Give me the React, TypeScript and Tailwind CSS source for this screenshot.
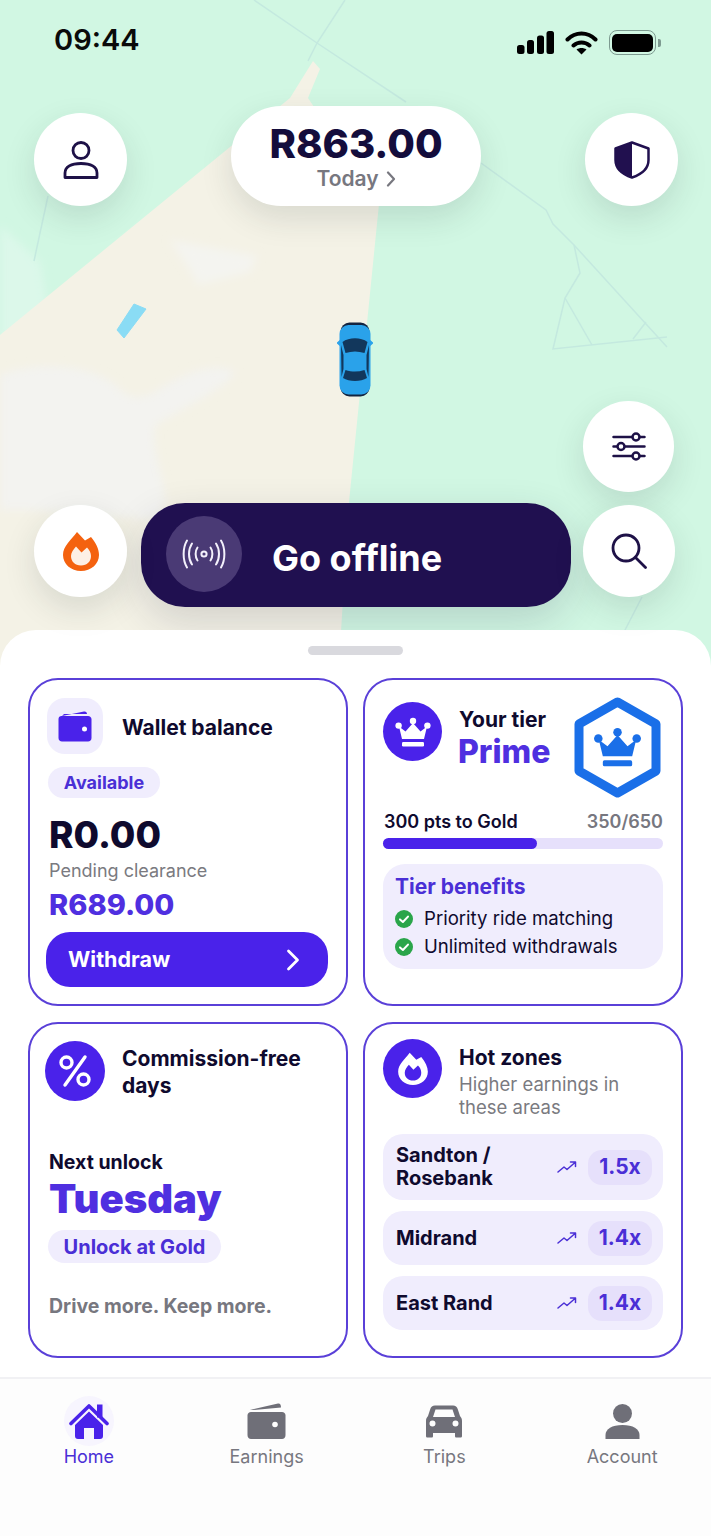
import React from 'react';

const CROWN = (
  <>
    <path d="M18 6 L25.5 14.5 L32 9.5 L29 22 H7 L4 9.5 L10.5 14.5 Z" strokeLinejoin="round" />
    <circle cx="18" cy="4" r="3.2" />
    <circle cx="3.6" cy="8.6" r="3.2" />
    <circle cx="32.4" cy="8.6" r="3.2" />
    <rect x="7" y="25" width="22" height="4.5" rx="1.2" />
  </>
);

const FLAME_OUTER =
  'M14 1 L22 9.5 L28 6 C33 12 36 18 36 24 C36 33 28 40 18 40 C8 40 0 33 0 24 C0 15 8 9 14 1 Z';
const FLAME_INNER =
  'M13 15.5 L18.5 21.5 L24 16.5 C26.5 19 28 22 28 25 C28 30.5 24 34.5 18 34.5 C12 34.5 8 30.5 8 25 C8 21.5 10.5 18.5 13 15.5 Z';

const MapBackground = () => (
  <svg className="absolute left-0 top-0" width="711" height="680" viewBox="0 0 711 680">
    <defs>
      <filter id="soft" x="-20%" y="-20%" width="140%" height="140%">
        <feGaussianBlur stdDeviation="4" />
      </filter>
    </defs>
    <rect width="711" height="680" fill="#d1f7e3" />
    <path d="M0 225 L40 262 L48 310 L0 345 Z" fill="#dcf8ea" filter="url(#soft)" />
    <path d="M313 61 L320 69 L308 98 L379 204 L349 502 L338 680 L0 680 L0 335 L290 98 Z" fill="#f4f2e6" />
    <path
      d="M0 375 C40 360 90 365 115 385 C130 400 140 400 155 392 C180 375 215 360 235 372 C230 385 180 410 155 425 C150 450 165 480 165 500 L160 520 L30 510 L0 510 Z"
      fill="#f3f3f0"
      filter="url(#soft)"
    />
    <path d="M170 240 L257 256 L250 272 L198 285 L190 270 Z" fill="#f4f4f0" filter="url(#soft)" />
    <path d="M117 330 L134 304 L146 309 L124 338 Z" fill="#8adcf5" stroke="#8adcf5" strokeLinejoin="round" />
    <g fill="none" stroke="#c4e9df" strokeWidth="1.5">
      <path d="M254 0 L317 43 L406 102" />
      <path d="M345 0 L317 43 L308 61" />
      <path d="M481 163 L546 210 L553 224 L574 245 L667 347" />
      <path d="M574 245 L580 273 L565 298 L553 349 L667 337" />
      <path d="M565 298 L592 345" />
      <path d="M633 339 L646 322" />
      <path d="M48 196 L34 261" />
      <path d="M642 597 L624 632" />
    </g>
  </svg>
);

const Car = () => (
  <svg width="36" height="75" viewBox="0 0 36 75">
    <rect x="3.5" y="0.5" width="29" height="74" rx="9" fill="#14243f" />
    <rect x="2.5" y="3" width="31" height="69.5" rx="9" fill="#2aa2ea" />
    <path d="M0.5 21 L4 18 V24 Z M35.5 21 L32 18 V24 Z" fill="#2aa2ea" stroke="#2aa2ea" strokeWidth="1.5" />
    <path d="M5.5 20 C12 15 24 15 30.5 20 L27.5 31 C21 29 15 29 8.5 31 Z" fill="#12375c" />
    <path d="M8.5 48 C15 50 21 50 27.5 48 L30 56 C24 60 12 60 6 56 Z" fill="#12375c" />
    <path d="M4 23 L6.5 33 V47 L4.5 55 Z M32 23 L29.5 33 V47 L31.5 55 Z" fill="#12375c" />
  </svg>
);

const RoundButton = ({ className, children }: { className: string; children: React.ReactNode }) => (
  <div className={`relative z-10 flex shrink-0 items-center justify-center rounded-full bg-white shadow-[0_12px_32px_rgba(30,50,50,0.13)] ${className}`}>
    {children}
  </div>
);

const CheckDot = () => (
  <svg width="18" height="18" viewBox="0 0 18 18" className="shrink-0">
    <circle cx="9" cy="9" r="9" fill="#2aa54a" />
    <path d="M5 9.4 L7.9 12 L13 6.6" fill="none" stroke="#fff" strokeWidth="2" strokeLinecap="round" strokeLinejoin="round" />
  </svg>
);

const Trend = () => (
  <svg width="20" height="14" viewBox="0 0 20 14" className="shrink-0">
    <path d="M1 12 L7 7 L10 9.5 L18 2.5 M13.5 2 H18.5 V6.5" fill="none" stroke="#4a2fd6" strokeWidth="1.5" strokeLinecap="round" strokeLinejoin="round" />
  </svg>
);

const NavItem = ({ label, active, children }: { label: string; active?: boolean; children: React.ReactNode }) => (
  <div className="flex flex-col items-center">
    <div className="flex h-[38px] items-center justify-center">{children}</div>
    <span className={`mt-[4px] text-[18px] leading-[26px] ${active ? 'text-[#4a2fd6]' : 'text-[#77777f]'}`}>{label}</span>
  </div>
);

export default function App() {
  return (
    <main className="relative h-[1536px] w-[711px] overflow-hidden bg-white font-['Inter',sans-serif] text-[#0f0a2e]">
      <MapBackground />

      <section className="relative h-[630px]">
        {/* Status bar */}
        <div className="flex h-[106px] items-start justify-between pl-[54px] pr-[50px] pt-[22px]">
          <span className="text-[29px] font-semibold leading-[36px] text-[#0a0a0a]">09:44</span>
          <div className="mt-[8px] flex items-center gap-[11px]">
            <svg width="37" height="23" viewBox="0 0 37 23">
              <rect x="0" y="14" width="7.5" height="9" rx="2.5" />
              <rect x="10" y="9" width="7" height="14" rx="2.5" />
              <rect x="20" y="4.5" width="7" height="18.5" rx="2.5" />
              <rect x="29.5" y="0" width="7.5" height="23" rx="2.5" />
            </svg>
            <svg width="33" height="24" viewBox="0 0 33 24">
              <path d="M2.5 8.5 C10.5 0.5 22.5 0.5 30.5 8.5 M8.5 14.5 C13 10.5 20 10.5 24.5 14.5" fill="none" stroke="#000" strokeWidth="4" strokeLinecap="round" />
              <path d="M16.5 23.5 L11.5 18.5 C14.5 16.5 18.5 16.5 21.5 18.5 Z" />
            </svg>
            <div className="flex items-center gap-[2px]">
              <div className="flex h-[25px] w-[47px] items-center justify-center rounded-[8px] border-[1.5px] border-[#7d9a90]">
                <div className="h-[18px] w-[41px] rounded-[5px] bg-black" />
              </div>
              <div className="h-[8px] w-[3px] rounded-r-[2px] bg-[#7d9a90]" />
            </div>
          </div>
        </div>

        {/* Top controls */}
        <div className="flex items-end justify-between pl-[34px] pr-[33px]">
          <RoundButton className="h-[93px] w-[93px]">
            <svg width="36" height="38" viewBox="0 0 36 38" fill="none" stroke="#1e1147" strokeWidth="2.8">
              <circle cx="18" cy="9.5" r="8" />
              <path d="M2 36.5 V32 C2 26 8 22.5 18 22.5 C28 22.5 34 26 34 32 V36.5 Z" strokeLinejoin="round" />
            </svg>
          </RoundButton>
          <div className="flex h-[100px] w-[250px] flex-col items-center rounded-[50px] bg-white pt-[16px] shadow-[0_12px_32px_rgba(30,50,50,0.13)]">
            <span className="text-[40px] font-extrabold leading-[44px] text-[#140d3c]">R863.00</span>
            <span className="mt-[1px] flex items-center gap-[7px] text-[21px] font-semibold leading-[24px] text-[#77777f]">
              Today
              <svg width="10" height="16" viewBox="0 0 10 16" fill="none" stroke="#77777f" strokeWidth="2.2" strokeLinecap="round" strokeLinejoin="round">
                <path d="M2 1.5 L8 8 L2 14.5" />
              </svg>
            </span>
          </div>
          <RoundButton className="h-[93px] w-[93px]">
            <svg width="36" height="38" viewBox="0 0 36 38">
              <path d="M18 1.5 L34.5 7.5 V19 C34.5 28 27 33.5 18 36.5 C9 33.5 1.5 28 1.5 19 V7.5 Z" fill="#fff" stroke="#21104f" strokeWidth="2.5" strokeLinejoin="round" />
              <path d="M18 1.5 L1.5 7.5 V19 C1.5 28 9 33.5 18 36.5 Z" fill="#21104f" />
            </svg>
          </RoundButton>
        </div>

        {/* Car marker, sits on the map */}
        <div className="absolute left-[337px] top-[322px]">
          <Car />
        </div>

        <div className="mt-[195px] flex justify-end pr-[37px]">
          <RoundButton className="h-[91px] w-[91px]">
            <svg width="34" height="29" viewBox="0 0 34 29" fill="none" stroke="#1e1147" strokeWidth="2.5" strokeLinecap="round">
              <path d="M1.5 5 H20 M28 5 H32.5 M1.5 14.5 H5 M13 14.5 H32.5 M1.5 24 H20 M28 24 H32.5" />
              <circle cx="24" cy="5" r="3.5" />
              <circle cx="9" cy="14.5" r="3.5" />
              <circle cx="24" cy="24" r="3.5" />
            </svg>
          </RoundButton>
        </div>

        {/* Bottom controls */}
        <div className="mt-[11px] flex items-start pl-[34px]">
          <RoundButton className="mt-[2px] h-[92px] w-[93px]">
            <svg width="36" height="40" viewBox="0 0 36 40">
              <path d={FLAME_OUTER} fill="#f4620f" />
              <path d={FLAME_INNER} fill="#fdf0e6" />
            </svg>
          </RoundButton>
          <div className="ml-[14px] flex h-[104px] w-[430px] items-center rounded-[44px] bg-[#201050] pl-[25px] shadow-[0_14px_40px_rgba(30,30,60,0.16)]">
            <div className="-mt-[2px] flex h-[76px] w-[76px] items-center justify-center rounded-full bg-[#4a3a75]">
              <svg width="44" height="30" viewBox="0 0 44 30" fill="none" stroke="#f3f0fb" strokeWidth="2" strokeLinecap="round">
                <circle cx="22" cy="15" r="2.6" />
                <path d="M15.5 8.5 C13 12 13 18 15.5 21.5 M28.5 8.5 C31 12 31 18 28.5 21.5" />
                <path d="M10 4.5 C6 10.5 6 19.5 10 25.5 M34 4.5 C38 10.5 38 19.5 34 25.5" />
                <path d="M5 1.5 C0.5 9 0.5 21 5 28.5 M39 1.5 C43.5 9 43.5 21 39 28.5" />
              </svg>
            </div>
            <span className="ml-[30px] mt-[6px] text-[36px] font-bold leading-[42px] text-white">Go offline</span>
          </div>
          <RoundButton className="ml-[12px] mt-[2px] h-[92px] w-[92px]">
            <svg width="36" height="36" viewBox="0 0 36 36" fill="none" stroke="#1e1147" strokeWidth="2.8" strokeLinecap="round">
              <circle cx="15" cy="15" r="13" />
              <path d="M24.5 24.5 L34.5 34.5" />
            </svg>
          </RoundButton>
        </div>
      </section>

      {/* Bottom sheet */}
      <section className="relative h-[906px] rounded-t-[36px] bg-white pt-[16px]">
        <div className="mx-auto h-[9px] w-[95px] rounded-full bg-[#d9d9de]" />

        <div className="mt-[23px] grid grid-cols-2 grid-rows-[328px_336px] gap-x-[15px] gap-y-[16px] px-[28px]">
          {/* Wallet */}
          <div className="rounded-[30px] border-2 border-[#5a40d8] pl-[17px] pt-[18px]">
            <div className="flex items-center">
              <div className="flex h-[56px] w-[56px] items-center justify-center rounded-[18px] bg-[#f0edfd]">
                <svg width="34" height="31" viewBox="0 0 34 31" fill="#4a22ea">
                  <path d="M4 5 L26 0.5 C28 0.2 29 1.5 29 3 H6 Z" />
                  <path d="M3.5 5 H30 C32 5 33.5 6.5 33.5 8.5 V27 C33.5 29 32 30.5 30 30.5 H4 C2 30.5 0.5 29 0.5 27 V8 C0.5 6.3 1.8 5 3.5 5 Z" />
                  <circle cx="26.5" cy="18" r="2.5" fill="#fff" />
                </svg>
              </div>
              <h2 className="ml-[19px] mt-[3px] text-[21px] font-bold leading-[26px]">Wallet balance</h2>
            </div>
            <div className="ml-px mt-[13px] flex h-[31px] w-[112px] items-center justify-center rounded-full bg-[#f0edfd] text-[18px] font-bold text-[#4a2fd6]">
              Available
            </div>
            <div className="ml-[2px] mt-[17px] text-[37px] font-extrabold leading-[40px]">R0.00</div>
            <div className="ml-[2px] mt-[4px] text-[18px] leading-[24px] text-[#7a7a80]">Pending clearance</div>
            <div className="ml-[2px] mt-[5px] text-[29px] font-extrabold leading-[34px] text-[#4f2fe0]">R689.00</div>
            <div className="-ml-px mt-[10px] flex h-[55px] w-[282px] items-center justify-between rounded-[24px] bg-[#4a22ea] pl-[22px] pr-[28px] text-[21.5px] font-bold text-white">
              Withdraw
              <svg width="14" height="22" viewBox="0 0 14 22" fill="none" stroke="#fff" strokeWidth="2.8" strokeLinecap="round" strokeLinejoin="round">
                <path d="M2.5 2 L11.5 11 L2.5 20" />
              </svg>
            </div>
          </div>

          {/* Tier */}
          <div className="rounded-[30px] border-2 border-[#5a40d8] px-[18px] pt-[17px]">
            <div className="flex items-start">
              <div className="mt-[5px] flex h-[59px] w-[59px] shrink-0 items-center justify-center rounded-full bg-[#4a22ea]">
                <svg width="36" height="30" viewBox="0 0 36 30" fill="#fff">{CROWN}</svg>
              </div>
              <div className="ml-[17px] pt-[10px]">
                <div className="text-[21px] font-bold leading-[26px]">Your tier</div>
                <div className="-ml-px text-[32px] font-extrabold leading-[38px] text-[#4f2fe0]">Prime</div>
              </div>
              <svg width="87" height="101" viewBox="0 0 87 101" className="ml-auto mr-[2px]">
                <path d="M43.5 5 L82 27 V74 L43.5 96 L5 74 V27 Z" fill="#fff" stroke="#1a6fe8" strokeWidth="9" strokeLinejoin="round" />
                <svg x="18" y="30" width="51" height="40" viewBox="0 0 36 30" fill="#1a6fe8">{CROWN}</svg>
              </svg>
            </div>
            <div className="mt-[12px] flex justify-between text-[18px] leading-[24px]">
              <span className="ml-px font-semibold">300 pts to Gold</span>
              <span className="font-semibold text-[#77777f]">350/650</span>
            </div>
            <div className="mt-[4px] h-[11px] rounded-full bg-[#e6e0fb]">
              <div className="h-full w-[154px] rounded-full bg-[#4a22ea]" />
            </div>
            <div className="mt-[15px] h-[105px] rounded-[22px] bg-[#f0edfd] pl-[12px] pt-[10px]">
              <div className="text-[21px] font-bold leading-[26px] text-[#4a2fd6]">Tier benefits</div>
              <div className="mt-[5px] flex h-[28px] items-center gap-[11px] text-[18.6px]">
                <CheckDot />
                Priority ride matching
              </div>
              <div className="flex h-[28px] items-center gap-[11px] text-[18.6px]">
                <CheckDot />
                Unlimited withdrawals
              </div>
            </div>
          </div>

          {/* Commission */}
          <div className="rounded-[30px] border-2 border-[#5a40d8] pl-[15px] pt-[17px]">
            <div className="flex items-start">
              <div className="flex h-[60px] w-[60px] items-center justify-center rounded-full bg-[#4a22ea]">
                <svg width="34" height="34" viewBox="0 0 34 34" fill="none" stroke="#fff" strokeWidth="3.4" strokeLinecap="round">
                  <circle cx="8.5" cy="8.5" r="5.5" />
                  <circle cx="25.5" cy="25.5" r="5.5" />
                  <path d="M27 3 L7 31" />
                </svg>
              </div>
              <h2 className="ml-[17px] mt-[4px] text-[21px] font-bold leading-[27px]">
                Commission-free
                <br />
                days
              </h2>
            </div>
            <div className="ml-[4px] mt-[49px] text-[19.5px] font-bold leading-[24px]">Next unlock</div>
            <div className="ml-[4px] mt-[2px] text-[40px] font-black leading-[46px] text-[#4f2fe0]">Tuesday</div>
            <div className="ml-[3px] mt-[8px] flex h-[33px] w-[173px] items-center justify-center rounded-full bg-[#f0edfd] text-[20px] font-bold text-[#4a2fd6]">
              Unlock at Gold
            </div>
            <div className="ml-[4px] mt-[31px] text-[19.5px] font-bold leading-[24px] text-[#77777f]">Drive more. Keep more.</div>
          </div>

          {/* Hot zones */}
          <div className="rounded-[30px] border-2 border-[#5a40d8] px-[18px] pt-[15px]">
            <div className="flex items-start">
              <div className="flex h-[59px] w-[59px] shrink-0 items-center justify-center rounded-full bg-[#4a22ea]">
                <svg width="30" height="33" viewBox="0 0 36 40">
                  <path d={`${FLAME_OUTER} ${FLAME_INNER}`} fill="#fff" fillRule="evenodd" />
                </svg>
              </div>
              <div className="ml-[17px] pt-[6px]">
                <h2 className="text-[21px] font-bold leading-[26px]">Hot zones</h2>
                <p className="mt-[2px] text-[18.5px] leading-[23px] text-[#7a7a80]">
                  Higher earnings in
                  <br />
                  these areas
                </p>
              </div>
            </div>
            <div className="mt-[15px] flex flex-col gap-[11px]">
              {[
                { name: 'Sandton /\nRosebank', rate: '1.5x', rowClass: 'h-[66px]' },
                { name: 'Midrand', rate: '1.4x', rowClass: 'h-[54px]' },
                { name: 'East Rand', rate: '1.4x', rowClass: 'h-[54px]' },
              ].map((zone) => (
                <div key={zone.name} className={`flex items-center rounded-[20px] bg-[#f0edfd] pl-[13px] pr-[11px] ${zone.rowClass}`}>
                  <span className="whitespace-pre-line text-[20px] font-bold leading-[23px]">{zone.name}</span>
                  <span className="ml-auto mr-[11px]">
                    <Trend />
                  </span>
                  <span className="flex h-[35px] w-[64px] items-center justify-center rounded-[14px] bg-[#e6e0fb] text-[21px] font-bold text-[#4a2fd6]">
                    {zone.rate}
                  </span>
                </div>
              ))}
            </div>
          </div>
        </div>

        {/* Tab bar */}
        <nav className="mt-[19px] grid h-[159px] grid-cols-4 content-start border-t-2 border-[#f1f1f4] bg-[#fdfdfd] pt-[23px]">
          <NavItem label="Home" active>
            <div className="flex h-[50px] w-[50px] items-center justify-center rounded-full bg-[#f7f5fe]">
              <svg width="40" height="37" viewBox="0 0 40 37">
                <rect x="28" y="1.5" width="5.5" height="13" fill="#4a22ea" />
                <path d="M2 20.5 L20 3 L38 20.5" fill="none" stroke="#4a22ea" strokeWidth="3.6" strokeLinecap="round" strokeLinejoin="round" />
                <path d="M20 8.5 L34 22 V33 C34 35 33 36 31 36 H25 V25 H15 V36 H9 C7 36 6 35 6 33 V22 Z" fill="#4a22ea" />
              </svg>
            </div>
          </NavItem>
          <NavItem label="Earnings">
            <svg width="39" height="36" viewBox="0 0 39 36" fill="#6f6f78">
              <path d="M3 7 L31 0.5 C33 0.2 34 1.5 34 4.5 L6 7 Z" />
              <path d="M4 9 H35 C37 9 38.5 10.5 38.5 12.5 V32 C38.5 34.5 37 36 35 36 H4 C2 36 0.5 34.5 0.5 32 V12.5 C0.5 10.5 2 9 4 9 Z" />
              <circle cx="28" cy="21.5" r="2.8" fill="#fff" />
            </svg>
          </NavItem>
          <NavItem label="Trips">
            <svg width="36" height="33" viewBox="0 0 36 33" fill="#6f6f78">
              <path fillRule="evenodd" d="M9 0.5 H27 C29.5 0.5 31 2 31.7 4 L34 11 C35.3 12.5 36 14 36 16 V31 C36 32 35.3 32.5 34.5 32.5 H30.5 C29.5 32.5 29 32 29 31 V28 H7 V31 C7 32 6.5 32.5 5.5 32.5 H1.5 C0.7 32.5 0 32 0 31 V16 C0 14 0.7 12.5 2 11 L4.3 4 C5 2 6.5 0.5 9 0.5 Z M9.5 4.5 L7 12 H29 L26.5 4.5 Z M6.5 15.5 A3 3 0 1 0 6.5 21.5 A3 3 0 1 0 6.5 15.5 Z M29.5 15.5 A3 3 0 1 0 29.5 21.5 A3 3 0 1 0 29.5 15.5 Z" />
            </svg>
          </NavItem>
          <NavItem label="Account">
            <svg width="35" height="35" viewBox="0 0 35 35" fill="#6f6f78">
              <ellipse cx="17.5" cy="9.5" rx="9.5" ry="9.5" />
              <path d="M0.5 35 V31 C0.5 25 7 21 17.5 21 C28 21 34.5 25 34.5 31 V35 Z" />
            </svg>
          </NavItem>
        </nav>
      </section>
    </main>
  );
}
